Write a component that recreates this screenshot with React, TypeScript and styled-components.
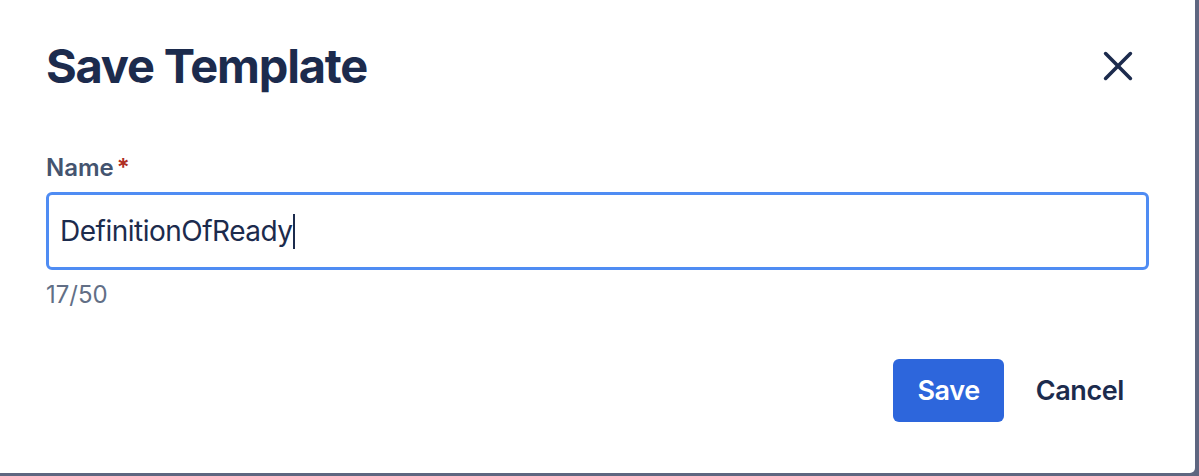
import * as React from 'react'
import styled, { createGlobalStyle } from 'styled-components'

const GlobalStyle = createGlobalStyle`
  html, body {
    margin: 0;
    padding: 0;
    background: #5e6680;
  }
  body {
    font-family: Inter, "Noto Sans", "Liberation Sans", sans-serif;
    -webkit-font-smoothing: antialiased;
  }
`

const Backdrop = styled.div`
  width: 1199px;
  height: 476px;
  background: #5e6680;
  overflow: hidden;
`

const Dialog = styled.div`
  width: 1195px;
  height: 473px;
  box-sizing: border-box;
  background: #ffffff;
  border-radius: 0 0 5px 0;
  padding: 34px 46px 0 46px;
  display: flex;
  flex-direction: column;
`

const Header = styled.header`
  display: flex;
  align-items: center;
  justify-content: space-between;
  height: 64px;
`

const Title = styled.h1`
  margin: 0;
  font-size: 47px;
  line-height: 56px;
  font-weight: 700;
  letter-spacing: -1.2px;
  color: #1c2b4d;
`

const CloseButton = styled.button`
  width: 64px;
  height: 64px;
  margin-right: -1px;
  border: none;
  background: transparent;
  padding: 0;
  display: flex;
  align-items: center;
  justify-content: center;
  cursor: pointer;
  color: #1c2b4d;
`

const Body = styled.div`
  display: flex;
  flex-direction: column;
  margin-top: 54px;
`

const Label = styled.label`
  display: flex;
  gap: 3px;
  font-size: 24px;
  line-height: 32px;
  font-weight: 600;
  color: #44546f;
`

const Required = styled.span`
  color: #ae2e24;
`

const Field = styled.div`
  margin-top: 8px;
  height: 78px;
  box-sizing: border-box;
  border: 3px solid #4f8cf3;
  border-radius: 6px;
  padding: 0 11px;
  display: flex;
  align-items: center;
  font-size: 28px;
  letter-spacing: -0.5px;
  color: #1c2b4d;
`

const Caret = styled.span`
  display: inline-block;
  width: 2px;
  height: 35px;
  margin-left: 0;
  background: #1c2b4d;
`

const Helper = styled.div`
  margin-top: 9px;
  font-size: 24px;
  line-height: 32px;
  color: #626f86;
`

const Footer = styled.footer`
  display: flex;
  justify-content: flex-end;
  gap: 8px;
  margin-top: 48px;
  margin-right: 1px;
`

const Button = styled.button<{ $primary?: boolean }>`
  height: 63px;
  padding: 0 24px;
  border: none;
  border-radius: 6px;
  font-family: inherit;
  font-size: 27px;
  font-weight: 600;
  letter-spacing: -0.4px;
  cursor: pointer;
  background: ${(p) => (p.$primary ? '#2d66dc' : 'transparent')};
  color: ${(p) => (p.$primary ? '#ffffff' : '#1c2b4d')};
`

export default function App() {
  return (
    <>
      <GlobalStyle />
      <Backdrop>
        <Dialog>
          <Header>
            <Title>Save Template</Title>
            <CloseButton aria-label="Close">
              <svg width="48" height="48" viewBox="0 0 24 24">
                <path
                  d="M5.8 5.8 L18.2 18.2 M18.2 5.8 L5.8 18.2"
                  stroke="currentColor"
                  strokeWidth="1.8"
                  strokeLinecap="round"
                  fill="none"
                />
              </svg>
            </CloseButton>
          </Header>
          <Body>
            <Label>
              Name<Required>*</Required>
            </Label>
            <Field>
              <span>DefinitionOfReady</span>
              <Caret />
            </Field>
            <Helper>17/50</Helper>
          </Body>
          <Footer>
            <Button $primary>Save</Button>
            <Button>Cancel</Button>
          </Footer>
        </Dialog>
      </Backdrop>
    </>
  )
}
